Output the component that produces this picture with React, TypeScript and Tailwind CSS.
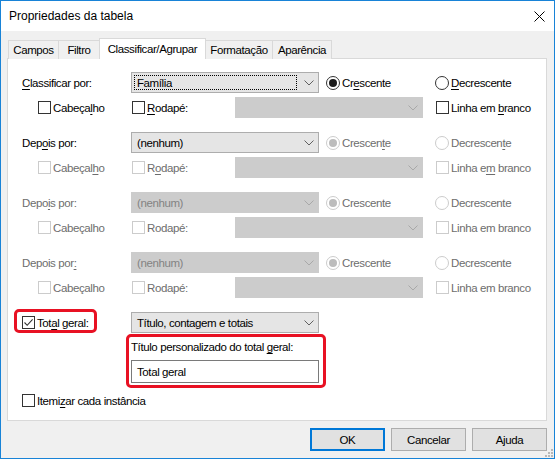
import React from 'react';

const GRAY = 'text-[#6d6d6d]';

function U({ children }: { children: React.ReactNode }) {
  return <span className="underline decoration-1 underline-offset-[2px]">{children}</span>;
}

function Check({ checked = false, disabled = false }: { checked?: boolean; disabled?: boolean }) {
  return (
    <span
      className={`w-[13px] h-[13px] shrink-0 border bg-white flex items-center justify-center ${disabled ? 'border-[#cccccc]' : 'border-[#333333]'}`}
    >
      {checked && (
        <svg width="11" height="11" viewBox="0 0 11 11">
          <path d="M1.5 5.5 L4.2 8.3 L9.6 2.4" fill="none" stroke="#333" strokeWidth="1.1" />
        </svg>
      )}
    </span>
  );
}

function Radio({ checked = false, disabled = false }: { checked?: boolean; disabled?: boolean }) {
  return (
    <span
      className={`w-[14px] h-[14px] shrink-0 rounded-full border bg-white flex items-center justify-center ${disabled ? 'border-[#cccccc]' : 'border-[#333333]'}`}
    >
      {checked && <span className={`w-[8px] h-[8px] rounded-full ${disabled ? 'bg-[#bcbcbc]' : 'bg-[#1a1a1a]'}`} />}
    </span>
  );
}

function Chevron({ disabled = false }: { disabled?: boolean }) {
  return (
    <svg width="10" height="6" viewBox="0 0 10 6">
      <polyline points="0.5,0.5 5,5 9.5,0.5" fill="none" stroke={disabled ? '#a8a8a8' : '#606060'} strokeWidth="1" />
    </svg>
  );
}

function Combo({ text = '', disabled = false, focus = false, w = 'w-[188px]' }: { text?: string; disabled?: boolean; focus?: boolean; w?: string }) {
  return (
    <div
      className={`${w} h-[21px] shrink-0 border flex items-center ${disabled ? 'bg-[#cccccc] border-[#cccccc] text-[#838383]' : 'bg-[#e5e5e5] border-[#adadad] text-black'}`}
    >
      <div className="flex-1 h-full p-[2px]">
        <div className={`h-full flex items-center pl-[2px] ${focus ? 'border border-dotted border-black' : 'pl-[3px]'}`}>
          <span>{text}</span>
        </div>
      </div>
      <div className="w-[19px] h-full flex items-center justify-center">
        <Chevron disabled={disabled} />
      </div>
    </div>
  );
}

type Group = {
  label: React.ReactNode;
  value: string;
  comboDisabled: boolean;
  focus?: boolean;
  optsDisabled: boolean;
  crescente: React.ReactNode;
  decrescente: React.ReactNode;
  cabecalho: React.ReactNode;
  rodape: React.ReactNode;
  linha: React.ReactNode;
  labelGray?: boolean;
};

const groups: Group[] = [
  {
    label: <><U>C</U>lassificar por:</>,
    value: 'Família',
    comboDisabled: false,
    focus: true,
    optsDisabled: false,
    crescente: <>Cr<U>e</U>scente</>,
    decrescente: <><U>D</U>ecrescente</>,
    cabecalho: <>Cabeça<U>l</U>ho</>,
    rodape: <><U>R</U>odapé:</>,
    linha: <>Linha em <U>b</U>ranco</>,
  },
  {
    label: <>Dep<U>o</U>is por:</>,
    value: '(nenhum)',
    comboDisabled: false,
    optsDisabled: true,
    crescente: <>Crescen<U>t</U>e</>,
    decrescente: <>Decrescen<U>t</U>e</>,
    cabecalho: <>Cabeçal<U>h</U>o</>,
    rodape: <>R<U>o</U>dapé:</>,
    linha: <>Linha e<U>m</U> branco</>,
  },
  {
    label: <>Depo<U>i</U>s por:</>,
    value: '(nenhum)',
    comboDisabled: true,
    optsDisabled: true,
    labelGray: true,
    crescente: <>Crescente</>,
    decrescente: <>Decrescente</>,
    cabecalho: <>Cabeçalho</>,
    rodape: <>Rodapé:</>,
    linha: <>Linha em branco</>,
  },
  {
    label: <>Depois por<U>:</U></>,
    value: '(nenhum)',
    comboDisabled: true,
    optsDisabled: true,
    labelGray: true,
    crescente: <>Crescente</>,
    decrescente: <>Decrescente</>,
    cabecalho: <>Cabeçalho</>,
    rodape: <>Rodapé:</>,
    linha: <>Linha em branco</>,
  },
];

function SortGroup({ g }: { g: Group }) {
  const optText = g.optsDisabled ? GRAY : 'text-black';
  return (
    <div className="mb-[14px]">
      <div className="h-[21px] flex items-center">
        <div className={`w-[109px] shrink-0 ${g.labelGray ? GRAY : 'text-black'}`}>{g.label}</div>
        <Combo text={g.value} disabled={g.comboDisabled} focus={g.focus} />
        <div className={`ml-[7px] w-[109px] flex items-center gap-[2px] ${optText}`}>
          <Radio checked disabled={g.optsDisabled} />
          <span>{g.crescente}</span>
        </div>
        <div className={`flex items-center gap-[2px] ${optText}`}>
          <Radio disabled={g.optsDisabled} />
          <span>{g.decrescente}</span>
        </div>
      </div>
      <div className={`mt-[4px] h-[21px] flex items-center ${optText}`}>
        <div className="ml-[16px] w-[94px] flex items-center gap-[2px]">
          <Check disabled={g.optsDisabled} />
          <span>{g.cabecalho}</span>
        </div>
        <div className="w-[103px] flex items-center gap-[2px]">
          <Check disabled={g.optsDisabled} />
          <span>{g.rodape}</span>
        </div>
        <Combo disabled />
        <div className="ml-[13px] flex items-center gap-[2px]">
          <Check disabled={g.optsDisabled} />
          <span>{g.linha}</span>
        </div>
      </div>
    </div>
  );
}

const tabs = [
  { name: 'Campos', w: 'w-[51px]' },
  { name: 'Filtro', w: 'w-[42px]' },
  { name: 'Classificar/Agrupar', w: 'w-[107px]', active: true },
  { name: 'Formatação', w: 'w-[68px]' },
  { name: 'Aparência', w: 'w-[60px]' },
];

function Button({ label, primary = false }: { label: string; primary?: boolean }) {
  return (
    <button
      type="button"
      className={`w-[75px] h-[23px] bg-[#e1e1e1] text-black flex items-center justify-center ${primary ? 'border-2 border-[#0078d7]' : 'border border-[#adadad]'}`}
    >
      {label}
    </button>
  );
}

export default function App() {
  return (
    <div className="w-[555px] h-[459px] border border-[#1883d7] bg-[#f0f0f0] flex flex-col font-['Liberation_Sans',Arial,sans-serif] text-[11.5px] tracking-[-0.4px] leading-[16px] text-black relative overflow-hidden">
      {/* Title bar */}
      <div className="h-[30px] bg-white flex items-center justify-between pl-[8px] pr-[9px] text-[12px] tracking-normal">
        <span>Propriedades da tabela</span>
        <svg width="11" height="11" viewBox="0 0 11 11">
          <path d="M0.5 0.5 L10.5 10.5 M10.5 0.5 L0.5 10.5" stroke="#000" strokeWidth="1" />
        </svg>
      </div>

      <div className="pl-[6px] pt-[7px]">
        {/* Tabs */}
        <div className="flex items-end h-[21px]">
          {tabs.map((t, i) =>
            t.active ? (
              <div
                key={t.name}
                className={`${t.w} -ml-px h-[21px] relative z-10 bg-white border border-b-0 border-[#d9d9d9] flex items-center justify-center pb-[1px]`}
              >
                {t.name}
              </div>
            ) : (
              <div
                key={t.name}
                className={`${t.w} ${i === 0 ? 'ml-px' : '-ml-px'} h-[19px] bg-[#f0f0f0] border border-b-0 border-[#d9d9d9] flex items-center justify-center`}
              >
                {t.name}
              </div>
            )
          )}
        </div>

        {/* Panel */}
        <div className="-mt-px w-[540px] h-[363px] bg-white border border-[#d9d9d9] pl-[14px] pt-[13px]">
          {groups.map((g, i) => (
            <SortGroup key={i} g={g} />
          ))}

          {/* Total geral */}
          <div className="mt-[2px] h-[21px] flex items-center">
            <div className="w-[109px] shrink-0">
              <div className="relative inline-flex items-center gap-[2px] h-[21px]">
                <Check checked />
                <span>
                  Tot<U>a</U>l geral:
                </span>
                <span className="absolute left-[-8px] top-[-3px] w-[83px] h-[24px] border-[3px] border-[#e81123] rounded-[5px]" />
              </div>
            </div>
            <Combo text="Título, contagem e totais" />
          </div>

          <div className="ml-[109px] mt-[6px] w-[188px] relative">
            <div className="h-[16px]">
              <span>
                Título personalizado do total <U>g</U>eral:
              </span>
            </div>
            <div className="mt-[5px] h-[23px] border border-[#7a7a7a] bg-white flex items-center pl-[5px]">
              <span>Total geral</span>
            </div>
            <span className="absolute left-[-5px] right-[-7px] top-[-5px] bottom-[-5px] border-[3px] border-[#e81123] rounded-[5px]" />
          </div>

          <div className="mt-[11px] flex items-center gap-[2px] h-[13px]">
            <Check />
            <span>
              Itemi<U>z</U>ar cada instância
            </span>
          </div>
        </div>

        {/* Buttons */}
        <div className="mt-[7px] w-[540px] flex justify-end gap-[6px]">
          <Button label="OK" primary />
          <Button label="Cancelar" />
          <Button label="Ajuda" />
        </div>
      </div>

      {/* size grip */}
      <svg className="absolute right-[1px] bottom-[1px]" width="8" height="8" viewBox="0 0 8 8">
        <rect x="6" y="0" width="2" height="2" fill="#b8b8b8" />
        <rect x="3" y="3" width="2" height="2" fill="#b8b8b8" />
        <rect x="6" y="3" width="2" height="2" fill="#b8b8b8" />
        <rect x="0" y="6" width="2" height="2" fill="#b8b8b8" />
        <rect x="3" y="6" width="2" height="2" fill="#b8b8b8" />
        <rect x="6" y="6" width="2" height="2" fill="#b8b8b8" />
      </svg>
    </div>
  );
}
